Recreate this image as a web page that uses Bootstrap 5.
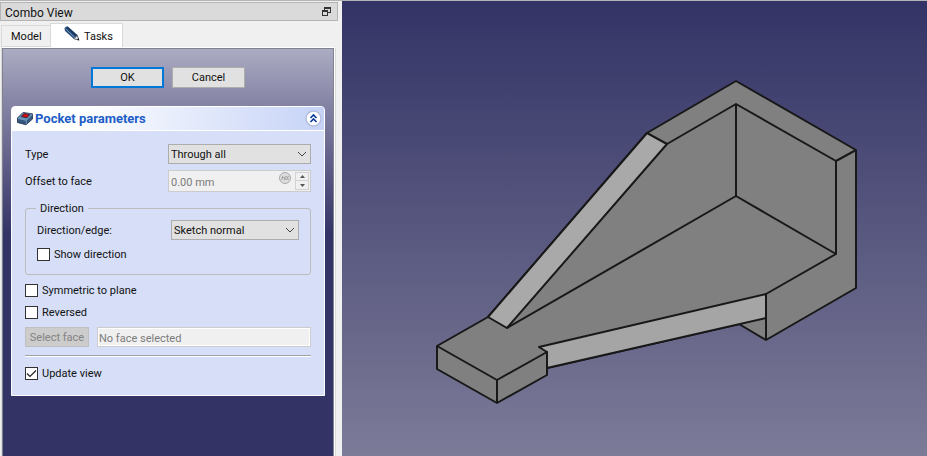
<!DOCTYPE html>
<html lang="en">
<head>
<meta charset="utf-8">
<meta name="viewport" content="width=device-width, initial-scale=1">
<title>Pocket parameters</title>
<link href="https://cdn.jsdelivr.net/npm/bootstrap@5.3.0/dist/css/bootstrap.min.css" rel="stylesheet">
<style>
body { font-family: Roboto, "Liberation Sans", sans-serif; font-size: 11px; line-height: 14px; color: #111; background: #f0f0f0; border-top: 1px solid #b4b4b4; min-height: 100vh; }
.combo { flex: 0 0 342px; padding: 1px 4px 0 0; }
.dock-title { height: 19px; background: #dadada; border: 1px solid #b4b4b4; font-size: 12px; padding: 2px 6px 0 4px; }
.dock-title button { line-height: 0; padding-bottom: 2px; }
.dock-tabs { padding: 2px 0 0 1px; }
.dock-tabs .nav-link { border: 1px solid #d9d9d9; border-radius: 0; background: #f0f0f0; color: #111; padding: 2px 9px 0; height: 22px; margin: 0; }
.dock-tabs .nav-item:first-child .nav-link { width: 50px; }
.dock-tabs .nav-link.active { height: 24px; width: 73px; background: #fff; border-bottom: 0; padding: 2px 11px 0 13px; color: #111; }
.dock-tabs .nav-item + .nav-item { margin-left: -1px; }
.frame { border: solid; border-width: 1px 1px 0 1px; border-color: #fff #d9d9d9 #fff #d9d9d9; margin: 0 2px 0 1px; background: #fff; padding: 0 1px 0 0; }
.tasks { background: linear-gradient(#abacc3, #8a88a8 48px, #333366 185px); border: 1px solid #80828f; border-bottom: 0; padding: 18px 8px 8px; }
.push { height: 21px; width: 73px; font-size: 11px; line-height: 14px; padding: 1px 0 0; border-radius: 0; background: #e1e1e1; border: 1px solid #adadad; color: #111; }
.push-default { border: 2px solid #0078d7; }
.push:disabled { width: 64px; height: 20px; background: #ccc; border-color: #bfbfbf; color: #838383; opacity: 1; }
.task-card { border: 1px solid #fff; border-radius: 4px 4px 0 0; background: #d6dff7; margin-top: 18px; color: #111; }
.task-card .card-header { height: 24px; padding: 0 2px 0 5px; border-radius: 3px 3px 0 0; border-bottom: 1px solid #fff; background: linear-gradient(90deg, #fff 20%, #c6d3f7); color: #215dc6; font-size: 13px; }
.task-card .card-header strong { margin-left: 2px; }
.task-card .card-body { padding: 13px; }
.task-card label, .group legend { line-height: 12px; padding-top: 2px; }
.form-select, .form-control { font-size: 11px; line-height: 14px; border-radius: 0; height: 20px; min-height: 0; padding: 2px 20px 0 2px; color: #111; }
.form-select { border: 1px solid #adadad; background: #e1e1e1 url("data:image/svg+xml,%3Csvg xmlns='http://www.w3.org/2000/svg' viewBox='0 0 10 6'%3E%3Cpath d='M1 1l4 4 4-4' fill='none' stroke='%23444'/%3E%3C/svg%3E") no-repeat right 3px center / 10px 6px; }
.form-control:disabled { background: #f0f0f0; border: 1px solid #ccc; color: #7b7b7b; box-shadow: inset 0 0 0 1px #fff; padding: 2px 1px 0; opacity: 1; }
.field { width: 143px; }
.offset-row { margin-top: 6px; }
.edge-field { width: 128px; }
.spin { height: 22px; border: 1px solid #ccc; background: #f0f0f0; padding: 1px; }
.spin .form-control:disabled { border: 0; height: 18px; box-shadow: none; min-width: 0; padding: 2px 0 0 1px; }
.spin-keys button { width: 14px; height: 9px; line-height: 0; border: 1px solid #d2d2d2; background: #f0f0f0; padding: 0; display: flex; align-items: center; justify-content: center; }
.spin-keys button + button { margin-top: -1px; height: 10px; }
.group { border: 1px solid #bcbcbc; border-radius: 3px; padding: 5px 11px 11px; margin-top: 9px; }
.group legend { float: none; width: auto; font-size: 11px; margin: 0 0 0 -1px; padding-left: 4px; padding-right: 4px; }
.form-check { min-height: 0; padding: 0; }
.group .form-check { margin-top: 7px; }
.form-check .form-check-input { float: none; margin: 0; width: 13px; height: 13px; border: 1px solid #333; border-radius: 0; background-color: #fff; }
.form-check .form-check-input:checked { background-image: url("data:image/svg+xml,%3Csvg xmlns='http://www.w3.org/2000/svg' viewBox='0 0 11 11'%3E%3Cpath d='M1 5.500l3 3 6-6' fill='none' stroke='%23222' stroke-width='1.200'/%3E%3C/svg%3E"); background-size: 11px 11px; }
.rule { border: 0; border-top: 1px solid #a0a0a0; border-bottom: 1px solid #fff; opacity: 1; margin: 8px 0 9px; height: 2px; }
.view3d { background: linear-gradient(#333366, #7c7b98); }
</style>
</head>
<body class="d-flex">
<aside class="combo d-flex flex-column">
  <div class="dock-title d-flex align-items-center justify-content-between">
    <span>Combo View</span>
    <button type="button" class="border-0 bg-transparent px-0 pt-0" aria-label="Float panel">
      <svg width="9" height="9" viewBox="0 0 9 9" fill="#333"><path fill-rule="evenodd" d="M2 0h7v6H6V5h2V2H3v1H2zM0 3h6v6H0zM1 5v3h4V5z"/></svg>
    </button>
  </div>
  <ul class="nav dock-tabs align-items-end" role="tablist">
    <li class="nav-item"><a class="nav-link d-flex align-items-center" href="#model" role="tab">Model</a></li>
    <li class="nav-item"><a class="nav-link active d-flex align-items-center gap-1" href="#tasks" role="tab" aria-selected="true">
      <svg class="flex-shrink-0 align-self-start" width="16" height="15" viewBox="0 0 16 15"><path d="M.5 2.500Q1 .5 3.500.3L13.500 9l1.700 5.200L10 13 1 5z" fill="#294d78"/><path d="M1.500 2.800l9.500 9" stroke="#7398bd" stroke-width="1"/><path d="M3.500 1.500l8.500 8" stroke="#18375c" stroke-width="1.500"/><path d="M10 12.800l3.200-3.400 1.800 4.800z" fill="#e2e5e8" stroke="#333" stroke-width=".5"/><path d="M13 13.500l2.200.9-.7-2.400z" fill="#111"/></svg>
      Tasks</a></li>
  </ul>
  <div class="frame flex-fill d-flex flex-column">
    <div class="tasks flex-fill" id="tasks">
      <div class="d-flex justify-content-center gap-2">
        <button type="button" class="btn push push-default">OK</button>
        <button type="button" class="btn push">Cancel</button>
      </div>
      <form class="card task-card">
        <div class="card-header d-flex align-items-center">
          <svg width="16" height="15" viewBox="0 0 16 15"><path d="M.5 7L6 1.500l9.500 1.300V8L9 13.800.5 11.500z" fill="#34587f" stroke="#182c43" stroke-width=".8"/><path d="M.8 7.200L6 1.800l9.300 1.300L9.500 9.300z" fill="#5f8bb6"/><path d="M4.500 5.500L7 2.500l5.500 1L10 6.700z" fill="#d70d12" stroke="#4a222c" stroke-width="1"/><path d="M9.300 9.500v4M1 7.400l8.300 2 6-6" fill="none" stroke="#8bb0d0" stroke-width=".7"/></svg>
          <strong class="me-auto">Pocket parameters</strong>
          <button type="button" class="border-0 bg-transparent p-0 lh-1" aria-label="Collapse">
            <svg class="d-block" width="17" height="17" viewBox="0 0 17 17"><circle cx="8.500" cy="8.500" r="7.500" fill="#fff" stroke="#b4bddc" stroke-width="1.400"/><path d="M5.500 8l3-3 3 3M5.500 12l3-3 3 3" fill="none" stroke="#0a3a9c" stroke-width="1.600"/></svg>
          </button>
        </div>
        <div class="card-body">
          <div class="d-flex align-items-center justify-content-between">
            <label for="type">Type</label>
            <select id="type" class="form-select field"><option>Through all</option></select>
          </div>
          <div class="offset-row d-flex align-items-center justify-content-between">
            <label for="offset">Offset to face</label>
            <div class="spin field d-flex align-items-center">
              <input id="offset" class="form-control" value="0.00 mm" disabled>
              <svg class="flex-shrink-0 align-self-start me-1" width="12" height="12" viewBox="0 0 12 12"><circle cx="6" cy="6" r="5.500" fill="#ddd" stroke="#aaa"/><path d="M2 8.500Q3.500 8 3.700 4M2.800 5.500h2M5 8l2-4M5 5l2 3M7.500 8l2-4M7.500 4l2 4" fill="none" stroke="#999" stroke-width=".8"/></svg>
              <div class="spin-keys">
                <button type="button" aria-label="Increase" disabled><svg width="5" height="3"><path d="M0 3L2.500 0 5 3z" fill="#555"/></svg></button>
                <button type="button" aria-label="Decrease" disabled><svg width="5" height="3"><path d="M0 0L2.500 3 5 0z" fill="#555"/></svg></button>
              </div>
            </div>
          </div>
          <fieldset class="group">
            <legend>Direction</legend>
            <div class="d-flex align-items-center justify-content-between">
              <label for="edge">Direction/edge:</label>
              <select id="edge" class="form-select edge-field"><option>Sketch normal</option></select>
            </div>
            <div class="form-check d-flex align-items-center gap-1">
              <input class="form-check-input" type="checkbox" id="show"><label for="show">Show direction</label>
            </div>
          </fieldset>
          <div class="form-check d-flex align-items-center gap-1 mt-2"><input class="form-check-input" type="checkbox" id="sym"><label for="sym">Symmetric to plane</label></div>
          <div class="form-check d-flex align-items-center gap-1 mt-2"><input class="form-check-input" type="checkbox" id="rev"><label for="rev">Reversed</label></div>
          <div class="d-flex gap-2 mt-2">
            <button type="button" class="btn push flex-shrink-0" disabled>Select face</button>
            <input class="form-control" value="No face selected" aria-label="Selected face" disabled>
          </div>
          <hr class="rule">
          <div class="form-check d-flex align-items-center gap-1"><input class="form-check-input" type="checkbox" id="upd" checked><label for="upd">Update view</label></div>
        </div>
      </form>
    </div>
  </div>
</aside>
<main class="view3d flex-fill">
  <svg class="d-block" width="585" height="455" viewBox="342 1 585 455" stroke="#181818" stroke-width="2" stroke-linejoin="round" role="img" aria-label="Bracket model">
    <path fill="#808080" d="M736 81L856 150V288L766 340L739 324L547 368V375L497 403L437 369V346L488 317L647 133z"/>
    <path fill="#a9a9a9" d="M647 133L667 144L507 328L488 317z"/>
    <path fill="#a5a5a5" d="M539 347L766 294V318L547 368V352z"/>
    <path fill="none" d="M667 144L736 104L836 161V254L736 196L507 328M736 104v92M836 161l20-11M836 254L766 294V340M437 346L497 380L547 352V375M497 380v23"/>
  </svg>
</main>
<script src="https://cdn.jsdelivr.net/npm/bootstrap@5.3.0/dist/js/bootstrap.bundle.min.js"></script>
</body>
</html>
